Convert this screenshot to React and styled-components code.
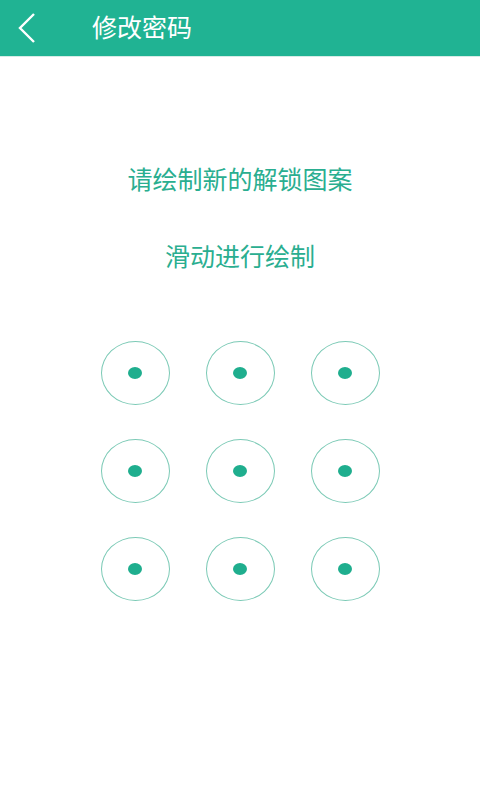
import React from 'react';
import styled, { createGlobalStyle } from 'styled-components';

const GlobalStyle = createGlobalStyle`
  html, body {
    margin: 0;
    padding: 0;
    background: #ffffff;
    font-family: "Noto Sans CJK SC", "Noto Sans", sans-serif;
  }
`;

const Page = styled.div`
  width: 480px;
  height: 800px;
  background: #ffffff;
  display: flex;
  flex-direction: column;
`;

const Header = styled.div`
  height: 57px;
  background: #20b393;
  display: flex;
  align-items: center;
  border-bottom: 1px solid #d6ece6;
  box-sizing: border-box;
`;

const BackButton = styled.div`
  width: 92px;
  height: 56px;
  display: flex;
  align-items: center;
  padding-left: 16px;
  box-sizing: border-box;
`;

const HeaderTitle = styled.div`
  color: #ffffff;
  font-size: 25px;
  line-height: 1;
  margin-top: -4px;
`;

const Prompt = styled.div`
  color: #2aae90;
  font-size: 25px;
  line-height: 32px;
  text-align: center;
  margin-top: ${(p) => p.$top}px;
`;

const Grid = styled.div`
  align-self: center;
  margin-top: 70px;
  display: grid;
  grid-template-columns: repeat(3, 69px);
  column-gap: 36px;
  row-gap: 34px;
`;

const Node = styled.div`
  width: 69px;
  height: 64px;
  box-sizing: border-box;
  border: 1.6px solid #7ccab6;
  border-radius: 50%;
  display: flex;
  align-items: center;
  justify-content: center;
`;

const Dot = styled.div`
  width: 14px;
  height: 12px;
  border-radius: 50%;
  background: #1fae8e;
`;

export default function App() {
  return (
    <Page>
      <GlobalStyle />
      <Header>
        <BackButton>
          <svg width="22" height="32" viewBox="0 0 22 32">
            <polyline points="18,2 4,16 18,30" fill="none" stroke="#ffffff" strokeWidth="2.4" />
          </svg>
        </BackButton>
        <HeaderTitle>修改密码</HeaderTitle>
      </Header>
      <Prompt $top={105}>请绘制新的解锁图案</Prompt>
      <Prompt $top={45}>滑动进行绘制</Prompt>
      <Grid>
        {Array.from({ length: 9 }).map((_, i) => (
          <Node key={i}>
            <Dot />
          </Node>
        ))}
      </Grid>
    </Page>
  );
}
